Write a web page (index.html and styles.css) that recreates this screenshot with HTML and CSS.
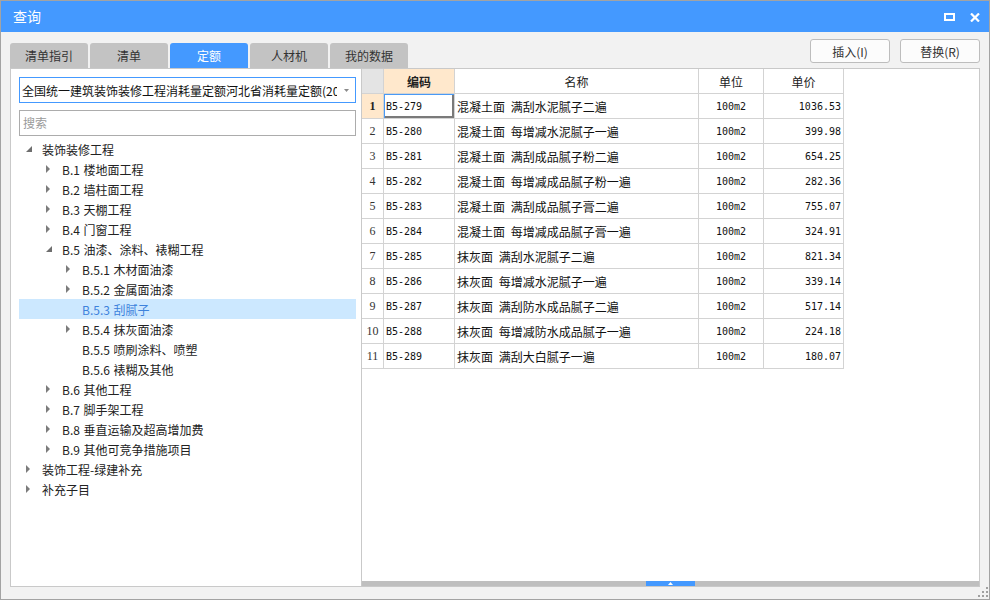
FILE: index.html
```html
<!DOCTYPE html>
<html lang="zh-CN">
<head>
<meta charset="utf-8">
<title>查询</title>
<link rel="stylesheet" href="styles.css">
</head>
<body>
<div class="window">
  <div class="titlebar">
    <span class="title">查询</span>
    <div class="win-btns">
      <svg class="ic" width="11" height="8" viewBox="0 0 11 8"><rect x="1" y="1" width="9" height="6" fill="none" stroke="#fff" stroke-width="2"/></svg>
      <svg class="ic" width="10" height="9" viewBox="0 0 10 9"><path d="M1 0.5 L9 8.5 M9 0.5 L1 8.5" stroke="#fff" stroke-width="2.2" fill="none"/></svg>
    </div>
  </div>

  <div class="toolbar">
    <div class="tabs">
      <div class="tab">清单指引</div>
      <div class="tab">清单</div>
      <div class="tab active">定额</div>
      <div class="tab">人材机</div>
      <div class="tab">我的数据</div>
    </div>
    <div class="actions">
      <button class="btn">插入(I)</button>
      <button class="btn">替换(R)</button>
    </div>
  </div>

  <div class="content">
    <div class="left">
      <div class="select">
        <span class="select-text">全国统一建筑装饰装修工程消耗量定额河北省消耗量定额(2012)</span>
        <svg class="caret" width="5" height="3" viewBox="0 0 5 3"><polygon points="0,0 5,0 2.5,3" fill="#8a8a8a"/></svg>
      </div>
      <div class="search">搜索</div>
      <ul class="tree">
        <li class="node lv0"><span class="toggle"><svg width="6" height="6" viewBox="0 0 6 6"><polygon points="6,0 6,6 0,6" fill="#6e6e6e"/></svg></span>装饰装修工程</li>
        <li class="node lv1"><span class="toggle"><svg width="4" height="8" viewBox="0 0 4 8"><polygon points="0,0 4,4 0,8" fill="#7c7c7c"/></svg></span>B.1 楼地面工程</li>
        <li class="node lv1"><span class="toggle"><svg width="4" height="8" viewBox="0 0 4 8"><polygon points="0,0 4,4 0,8" fill="#7c7c7c"/></svg></span>B.2 墙柱面工程</li>
        <li class="node lv1"><span class="toggle"><svg width="4" height="8" viewBox="0 0 4 8"><polygon points="0,0 4,4 0,8" fill="#7c7c7c"/></svg></span>B.3 天棚工程</li>
        <li class="node lv1"><span class="toggle"><svg width="4" height="8" viewBox="0 0 4 8"><polygon points="0,0 4,4 0,8" fill="#7c7c7c"/></svg></span>B.4 门窗工程</li>
        <li class="node lv1"><span class="toggle"><svg width="6" height="6" viewBox="0 0 6 6"><polygon points="6,0 6,6 0,6" fill="#6e6e6e"/></svg></span>B.5 油漆、涂料、裱糊工程</li>
        <li class="node lv2"><span class="toggle"><svg width="4" height="8" viewBox="0 0 4 8"><polygon points="0,0 4,4 0,8" fill="#7c7c7c"/></svg></span>B.5.1 木材面油漆</li>
        <li class="node lv2"><span class="toggle"><svg width="4" height="8" viewBox="0 0 4 8"><polygon points="0,0 4,4 0,8" fill="#7c7c7c"/></svg></span>B.5.2 金属面油漆</li>
        <li class="node lv2 selected"><span class="toggle"></span>B.5.3 刮腻子</li>
        <li class="node lv2"><span class="toggle"><svg width="4" height="8" viewBox="0 0 4 8"><polygon points="0,0 4,4 0,8" fill="#7c7c7c"/></svg></span>B.5.4 抹灰面油漆</li>
        <li class="node lv2"><span class="toggle"></span>B.5.5 喷刷涂料、喷塑</li>
        <li class="node lv2"><span class="toggle"></span>B.5.6 裱糊及其他</li>
        <li class="node lv1"><span class="toggle"><svg width="4" height="8" viewBox="0 0 4 8"><polygon points="0,0 4,4 0,8" fill="#7c7c7c"/></svg></span>B.6 其他工程</li>
        <li class="node lv1"><span class="toggle"><svg width="4" height="8" viewBox="0 0 4 8"><polygon points="0,0 4,4 0,8" fill="#7c7c7c"/></svg></span>B.7 脚手架工程</li>
        <li class="node lv1"><span class="toggle"><svg width="4" height="8" viewBox="0 0 4 8"><polygon points="0,0 4,4 0,8" fill="#7c7c7c"/></svg></span>B.8 垂直运输及超高增加费</li>
        <li class="node lv1"><span class="toggle"><svg width="4" height="8" viewBox="0 0 4 8"><polygon points="0,0 4,4 0,8" fill="#7c7c7c"/></svg></span>B.9 其他可竞争措施项目</li>
        <li class="node lv0"><span class="toggle"><svg width="4" height="8" viewBox="0 0 4 8"><polygon points="0,0 4,4 0,8" fill="#7c7c7c"/></svg></span>装饰工程-绿建补充</li>
        <li class="node lv0"><span class="toggle"><svg width="4" height="8" viewBox="0 0 4 8"><polygon points="0,0 4,4 0,8" fill="#7c7c7c"/></svg></span>补充子目</li>
      </ul>
    </div>

    <div class="gridpanel">
      <div class="gridarea">
        <div class="grid">
          <div class="c corner"></div>
          <div class="c hd hd-active">编码</div>
          <div class="c hd">名称</div>
          <div class="c hd">单位</div>
          <div class="c hd">单价</div>

          <div class="c rn rn-active">1</div><div class="c code focus">B5-279</div><div class="c name">混凝土面 满刮水泥腻子二遍</div><div class="c unit">100m2</div><div class="c price">1036.53</div>
          <div class="c rn">2</div><div class="c code">B5-280</div><div class="c name">混凝土面 每增减水泥腻子一遍</div><div class="c unit">100m2</div><div class="c price">399.98</div>
          <div class="c rn">3</div><div class="c code">B5-281</div><div class="c name">混凝土面 满刮成品腻子粉二遍</div><div class="c unit">100m2</div><div class="c price">654.25</div>
          <div class="c rn">4</div><div class="c code">B5-282</div><div class="c name">混凝土面 每增减成品腻子粉一遍</div><div class="c unit">100m2</div><div class="c price">282.36</div>
          <div class="c rn">5</div><div class="c code">B5-283</div><div class="c name">混凝土面 满刮成品腻子膏二遍</div><div class="c unit">100m2</div><div class="c price">755.07</div>
          <div class="c rn">6</div><div class="c code">B5-284</div><div class="c name">混凝土面 每增减成品腻子膏一遍</div><div class="c unit">100m2</div><div class="c price">324.91</div>
          <div class="c rn">7</div><div class="c code">B5-285</div><div class="c name">抹灰面 满刮水泥腻子二遍</div><div class="c unit">100m2</div><div class="c price">821.34</div>
          <div class="c rn">8</div><div class="c code">B5-286</div><div class="c name">抹灰面 每增减水泥腻子一遍</div><div class="c unit">100m2</div><div class="c price">339.14</div>
          <div class="c rn">9</div><div class="c code">B5-287</div><div class="c name">抹灰面 满刮防水成品腻子二遍</div><div class="c unit">100m2</div><div class="c price">517.14</div>
          <div class="c rn">10</div><div class="c code">B5-288</div><div class="c name">抹灰面 每增减防水成品腻子一遍</div><div class="c unit">100m2</div><div class="c price">224.18</div>
          <div class="c rn">11</div><div class="c code">B5-289</div><div class="c name">抹灰面 满刮大白腻子一遍</div><div class="c unit">100m2</div><div class="c price">180.07</div>
        </div>
      </div>
      <div class="hscroll">
        <div class="thumb"><svg width="5" height="3" viewBox="0 0 5 3"><polygon points="2.5,0 5,3 0,3" fill="#fff"/></svg></div>
      </div>
    </div>
  </div>

  <svg class="grip" width="10" height="10" viewBox="0 0 10 10">
    <rect x="8" y="0" width="2" height="2" fill="#a0a0a0"/>
    <rect x="4" y="4" width="2" height="2" fill="#a0a0a0"/>
    <rect x="8" y="4" width="2" height="2" fill="#a0a0a0"/>
    <rect x="0" y="8" width="2" height="2" fill="#a0a0a0"/>
    <rect x="4" y="8" width="2" height="2" fill="#a0a0a0"/>
    <rect x="8" y="8" width="2" height="2" fill="#a0a0a0"/>
  </svg>
</div>
</body>
</html>
```

FILE: styles.css
```css
html, body {
  margin: 0;
  padding: 0;
  background: #ffffff;
}

body {
  font-family: "Noto Sans CJK SC", "Noto Sans", sans-serif;
  font-size: 12px;
  color: #222;
}

.window {
  position: relative;
  width: 990px;
  height: 600px;
  box-sizing: border-box;
  border: 1px solid #a3a3a3;
  background: #f2f2f2;
  display: flex;
  flex-direction: column;
  overflow: hidden;
}

/* title bar */
.titlebar {
  height: 31px;
  flex: none;
  background: #4499ff;
  display: flex;
  align-items: center;
  padding: 0 9px 0 12px;
  color: #fff;
}

.title {
  font-size: 14px;
  line-height: 31px;
}

.win-btns {
  margin-left: auto;
  display: flex;
  align-items: center;
  gap: 15px;
  padding-top: 1px;
}

.ic {
  display: block;
}

/* toolbar */
.toolbar {
  height: 36px;
  flex: none;
  display: flex;
  align-items: flex-end;
  padding: 0 9px;
}

.tabs {
  display: flex;
  gap: 2px;
}

.tab {
  width: 78px;
  height: 25px;
  background: #c3c3c3;
  border-radius: 3px 3px 0 0;
  color: #333;
  font-size: 12px;
  display: flex;
  align-items: center;
  justify-content: center;
}

.tab.active {
  background: #4499ff;
  color: #fff;
}

.actions {
  margin-left: auto;
  align-self: flex-start;
  margin-top: 7px;
  display: flex;
  gap: 10px;
}

.btn {
  width: 80px;
  height: 24px;
  box-sizing: border-box;
  border: 1px solid #bdbdbd;
  border-radius: 3px;
  background: #fcfcfc;
  color: #333;
  font-family: "Noto Sans CJK SC", "Noto Sans", sans-serif;
  font-size: 12px;
  padding: 0;
}

/* content */
.content {
  height: 519px;
  flex: none;
  display: flex;
  padding: 0 9px;
}

.left {
  width: 351px;
  box-sizing: border-box;
  border: 1px solid #c9c9c9;
  border-right: none;
  background: #fff;
  padding: 8px 5px 0 8px;
}

.select {
  height: 26px;
  box-sizing: border-box;
  border: 1px solid #4499ff;
  display: flex;
  align-items: center;
  padding-left: 2px;
}

.select-text {
  width: 315px;
  overflow: hidden;
  white-space: nowrap;
  font-size: 12px;
  color: #111;
}

.caret {
  margin-left: 7px;
  display: block;
}

.search {
  margin-top: 7px;
  height: 26px;
  box-sizing: border-box;
  border: 1px solid #acacac;
  padding-left: 3px;
  line-height: 24px;
  color: #9a9a9a;
  font-size: 12px;
}

.tree {
  list-style: none;
  margin: 3px 0 0 0;
  padding: 0;
}

.node {
  height: 20px;
  display: flex;
  align-items: center;
  white-space: nowrap;
  color: #222;
  font-size: 12px;
  word-spacing: 1px;
}

.node.lv1 {
  padding-left: 20px;
}

.node.lv2 {
  padding-left: 40px;
}

.node.selected {
  background: #cce8ff;
  color: #3d82dc;
}

.toggle {
  width: 23px;
  flex: none;
  box-sizing: border-box;
  padding-left: 7px;
  display: flex;
  align-items: center;
}

.toggle svg {
  display: block;
}

/* grid panel */
.gridpanel {
  width: 619px;
  box-sizing: border-box;
  border: 1px solid #c9c9c9;
  background: #fff;
  display: flex;
  flex-direction: column;
}

.gridarea {
  flex: 1;
}

.grid {
  display: grid;
  grid-template-columns: 22px 71px 244px 65px 80px;
  grid-template-rows: 25px;
  grid-auto-rows: 25px;
  width: 482px;
}

.c {
  box-sizing: border-box;
  border-right: 1px solid #d3d3d3;
  border-bottom: 1px solid #d3d3d3;
  display: flex;
  align-items: center;
  white-space: nowrap;
  overflow: hidden;
  font-size: 12px;
  color: #111;
}

.corner {
  background: #e4e4e4;
}

.hd {
  justify-content: center;
  color: #222;
}

.hd-active {
  background: #ffe8cc;
  font-weight: bold;
}

.rn {
  justify-content: center;
  font-family: "Liberation Serif", serif;
  font-size: 12px;
  color: #333;
}

.rn-active {
  background: #ffe8cc;
  font-weight: bold;
  color: #222;
}

.code {
  padding-left: 2px;
  font-family: "DejaVu Sans Mono", monospace;
  font-size: 10px;
}

.focus {
  box-shadow: inset 1px 1px 0 #4a9af5, inset -2px -2px 0 #7a7a7a;
}

.name {
  padding-left: 2px;
  font-size: 12px;
  word-spacing: 3px;
}

.unit {
  justify-content: center;
  font-family: "DejaVu Sans Mono", monospace;
  font-size: 10px;
}

.price {
  justify-content: flex-end;
  padding-right: 2px;
  font-family: "DejaVu Sans Mono", monospace;
  font-size: 10px;
}

.hscroll {
  height: 5px;
  flex: none;
  background: #bfbfbf;
  display: flex;
  justify-content: center;
}

.thumb {
  width: 49px;
  background: #4499ff;
  display: flex;
  align-items: center;
  justify-content: center;
}

.thumb svg {
  display: block;
}

.grip {
  position: absolute;
  right: 1px;
  bottom: 2px;
  display: block;
}
```
